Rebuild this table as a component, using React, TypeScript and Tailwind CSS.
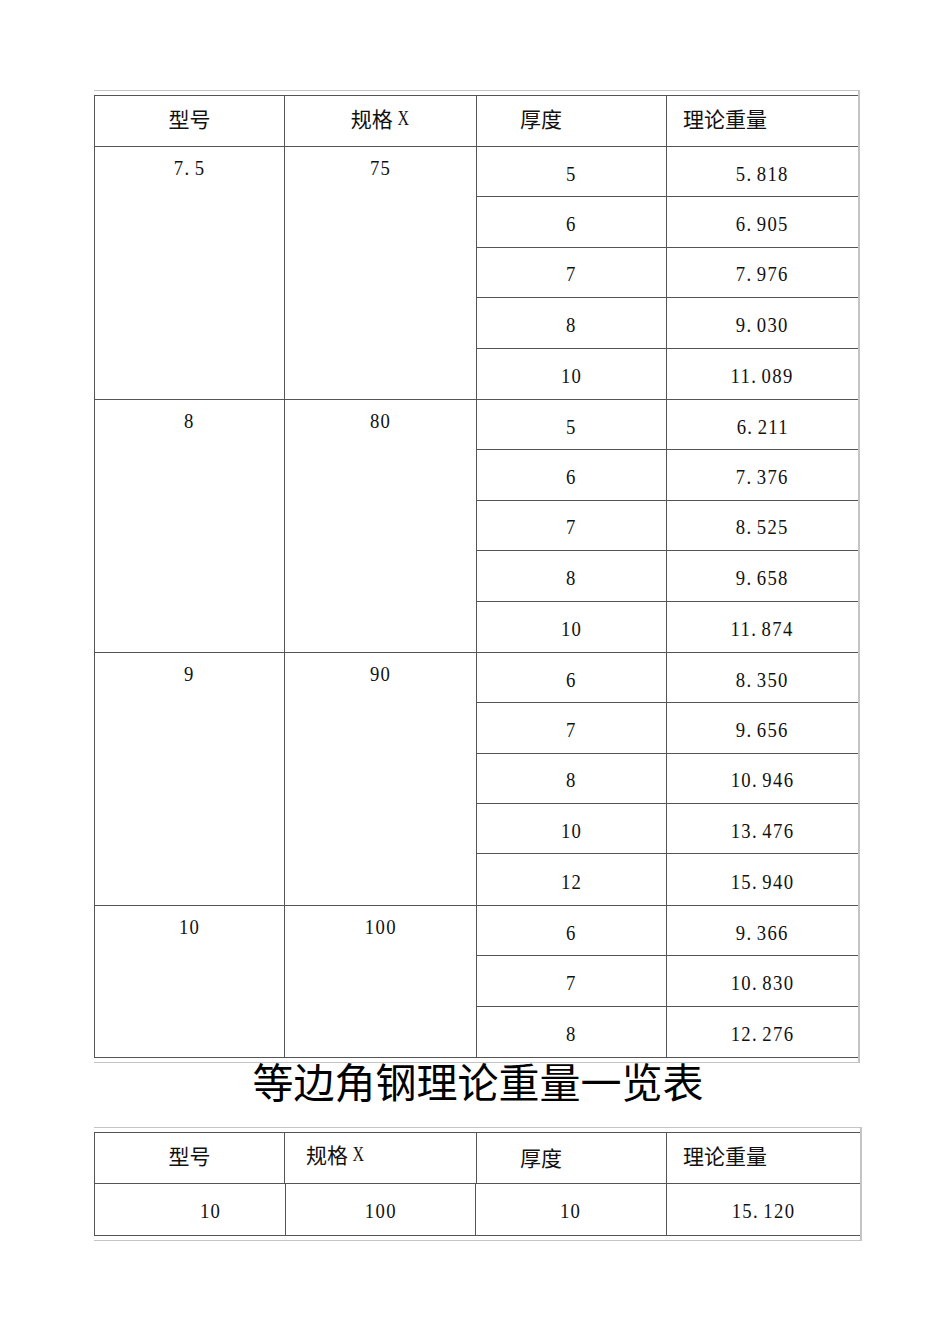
import type React from 'react';

const serif = "font-['Liberation_Serif','Noto_Serif_CJK_SC',serif]";
const cjk = "font-['Noto_Sans_CJK_SC','Noto_Sans',sans-serif]";

type Group = { model: string; size: string; rows: [string, string][] };

const groups: Group[] = [
  {
    model: '7.5',
    size: '75',
    rows: [
      ['5', '5.818'],
      ['6', '6.905'],
      ['7', '7.976'],
      ['8', '9.030'],
      ['10', '11.089'],
    ],
  },
  {
    model: '8',
    size: '80',
    rows: [
      ['5', '6.211'],
      ['6', '7.376'],
      ['7', '8.525'],
      ['8', '9.658'],
      ['10', '11.874'],
    ],
  },
  {
    model: '9',
    size: '90',
    rows: [
      ['6', '8.350'],
      ['7', '9.656'],
      ['8', '10.946'],
      ['10', '13.476'],
      ['12', '15.940'],
    ],
  },
  {
    model: '10',
    size: '100',
    rows: [
      ['6', '9.366'],
      ['7', '10.830'],
      ['8', '12.276'],
    ],
  },
];

/** Narrow serif number, the period gets a little extra room like the original font */
const Num: React.FC<{ value: string }> = ({ value }) => {
  const [a, b] = value.split('.');
  return (
    <span
      className={`${serif} inline-block origin-center scale-x-[0.85] text-[22px] leading-none tracking-[1.6px] text-[#111]`}
    >
      {a}
      {b !== undefined && (
        <>
          <span className="mr-[5px]">.</span>
          {b}
        </>
      )}
    </span>
  );
};

const Header: React.FC<{ second?: boolean }> = ({ second }) => (
  <div className={`flex h-[51px] border-b border-[#555] ${cjk} text-[21px] leading-none text-[#111]`}>
    <div className="flex w-[190px] items-center justify-center border-r border-[#555] pb-[6px]">型号</div>
    <div
      className={`flex w-[192px] items-center border-r border-[#555] ${
        second ? 'pb-[8px] pl-[21px]' : 'justify-center pb-[6px]'
      }`}
    >
      规格
      <span className={`${serif} ml-[3px] inline-block scale-x-[0.8] text-[20px]`}>X</span>
    </div>
    <div className={`flex w-[190px] items-center border-r border-[#555] pl-[43px] ${second ? 'pb-[2px]' : 'pb-[6px]'}`}>
      厚度
    </div>
    <div className="flex flex-1 items-center pb-[6px] pl-[16px]">理论重量</div>
  </div>
);

export default function App() {
  return (
    <div className="min-h-[1344px] w-[950px] bg-white pt-[90px]">
      {/* main table */}
      <div className="ml-[94px] w-[766px] border-y border-r-2 border-[#c4c4c4] py-[4px]">
        <div className="border-y border-l border-[#555]">
          <Header />
          {groups.map((g, gi) => (
            <div
              key={g.model}
              className={`flex ${gi < groups.length - 1 ? 'border-b border-[#555]' : ''}`}
            >
              <div className="flex w-[190px] justify-center border-r border-[#555] pt-[10px]">
                <Num value={g.model} />
              </div>
              <div className="flex w-[192px] justify-center border-r border-[#555] pt-[10px]">
                <Num value={g.size} />
              </div>
              <div className="flex flex-1 flex-col">
                {g.rows.map(([t, w], ri) => (
                  <div
                    key={t}
                    className={`flex h-[50.4px] ${
                      ri < g.rows.length - 1 ? 'border-b border-[#555]' : ''
                    }`}
                  >
                    <div className="flex w-[190px] items-center justify-center border-r border-[#555] pt-[4px]">
                      <Num value={t} />
                    </div>
                    <div className="flex flex-1 items-center justify-center pt-[4px]">
                      <Num value={w} />
                    </div>
                  </div>
                ))}
              </div>
            </div>
          ))}
        </div>
      </div>

      <h1
        className={`${cjk} mt-[-3px] flex h-[67px] items-start justify-center pl-[6px] text-[41px] leading-none text-black`}
      >
        等边角钢理论重量一览表
      </h1>

      {/* second table */}
      <div className="ml-[94px] w-[768px] border-y border-r-2 border-[#c4c4c4] py-[4px]">
        <div className="border-y border-l border-[#555]">
          <Header second />
          <div className="flex h-[51px]">
            <div className="flex w-[191px] items-center justify-center border-r border-[#555] pl-[42px] pt-[2px]">
              <Num value="10" />
            </div>
            <div className="flex w-[190px] items-center justify-center border-r border-[#555] pt-[2px]">
              <Num value="100" />
            </div>
            <div className="flex w-[191px] items-center justify-center border-r border-[#555] pt-[2px]">
              <Num value="10" />
            </div>
            <div className="flex flex-1 items-center justify-center pt-[2px]">
              <Num value="15.120" />
            </div>
          </div>
        </div>
      </div>
    </div>
  );
}
